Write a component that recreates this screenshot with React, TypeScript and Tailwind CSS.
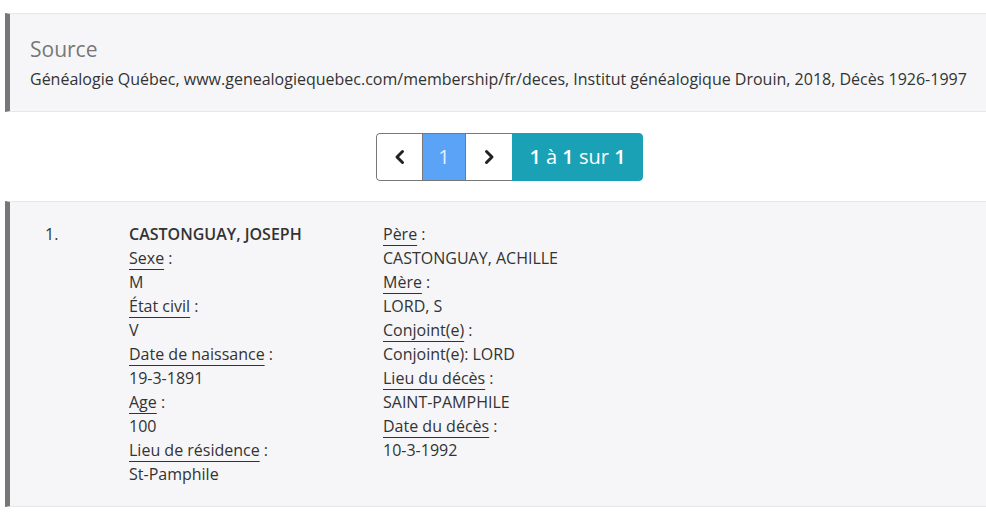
import React from 'react'

const left = [
  ['Sexe', 'M'],
  ['État civil', 'V'],
  ['Date de naissance', '19-3-1891'],
  ['Age', '100'],
  ['Lieu de résidence', 'St-Pamphile'],
]

const right = [
  ['Père', 'CASTONGUAY, ACHILLE'],
  ['Mère', 'LORD, S'],
  ['Conjoint(e)', 'Conjoint(e): LORD'],
  ['Lieu du décès', 'SAINT-PAMPHILE'],
  ['Date du décès', '10-3-1992'],
]

function Field({ label, value }: { label: string; value: string }) {
  return (
    <>
      <div>
        <span className="underline decoration-[#333] decoration-1 underline-offset-[5px]">{label}</span> :
      </div>
      <div>{value}</div>
    </>
  )
}

export default function App() {
  return (
    <div className="bg-white text-[16px] leading-6 text-[#333]" style={{ fontFamily: '"Open Sans", sans-serif' }}>
      <div className="pt-[13px]">
        <div className="ml-[5px] border-l-[5px] border-l-[#777] border-y border-y-[#e6e6e6] bg-[#f6f6f8] pl-5 pt-[23px] pb-[20px]">
          <div className="text-[21px] leading-6 text-[#777]">Source</div>
          <div className="mt-[6px]">
            Généalogie Québec, www.genealogiequebec.com/membership/fr/deces, Institut généalogique Drouin, 2018, Décès 1926-1997
          </div>
        </div>
      </div>

      <div className="mt-[21px] flex pl-[376px]">
        <div className="flex h-12 overflow-hidden rounded-[4px]">
          <button className="flex w-[46px] items-center justify-center rounded-l-[4px] border border-r-0 border-[#777] bg-white">
            <svg width="16" height="16" viewBox="0 0 16 16" fill="none" stroke="#222" strokeWidth="3" strokeLinecap="round" strokeLinejoin="round">
              <path d="M10.5 2.5 5 8l5.5 5.5" />
            </svg>
          </button>
          <div className="flex w-11 items-center justify-center border-y border-x border-[#777] bg-[#5aa3f6] text-[20px] text-[#e8f1fd]">1</div>
          <button className="flex w-[46px] items-center justify-center border-y border-[#777] bg-white">
            <svg width="16" height="16" viewBox="0 0 16 16" fill="none" stroke="#222" strokeWidth="3" strokeLinecap="round" strokeLinejoin="round">
              <path d="M5.5 2.5 11 8l-5.5 5.5" />
            </svg>
          </button>
          <div className="flex w-[131px] items-center justify-center rounded-r-[4px] bg-[#1ba1b6] text-[20px] text-white">
            <span><b className="font-semibold">1</b> à <b className="font-semibold">1</b> sur <b className="font-semibold">1</b></span>
          </div>
        </div>
      </div>

      <div className="mt-5 ml-[5px] flex border-l-[5px] border-l-[#777] border-y border-y-[#e6e6e6] bg-[#f6f6f8] pt-5 pb-5">
        <div className="w-[119px] pl-[35px]">1.</div>
        <div className="w-[254px]">
          <div className="font-semibold">CASTONGUAY, JOSEPH</div>
          {left.map(([l, v]) => <Field key={l} label={l} value={v} />)}
        </div>
        <div>
          {right.map(([l, v]) => <Field key={l} label={l} value={v} />)}
        </div>
      </div>
    </div>
  )
}
